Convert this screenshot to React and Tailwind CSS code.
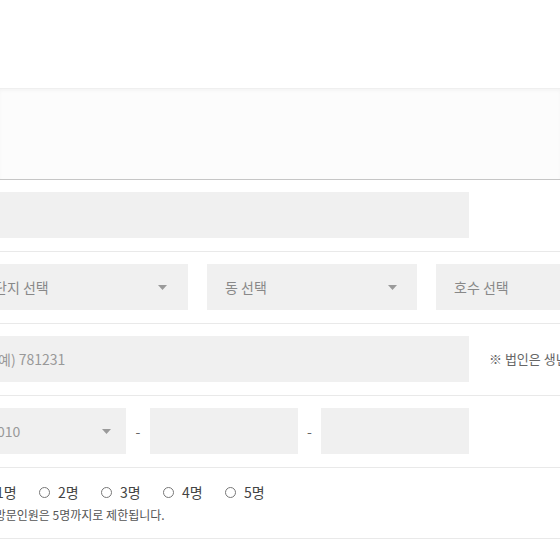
import React from 'react';

const font = { fontFamily: '"Noto Sans CJK KR", "Noto Sans", sans-serif' };

const Caret = () => (
  <svg width="9" height="5" viewBox="0 0 9 5" className="shrink-0">
    <path d="M0 0 H9 L4.5 5 Z" fill="#9a9a9a" />
  </svg>
);

const Row = ({ children, className = '' }) => (
  <div className={`border-b border-[#e9e9e9] pt-[12px] pb-[13px] ${className}`}>{children}</div>
);

const people = ['1명', '2명', '3명', '4명', '5명'];

export default function App() {
  return (
    <div
      className="w-[560px] h-[560px] overflow-hidden bg-white text-[14px] text-[#888]"
      style={font}
    >
      <div className="h-[88px] bg-white" />
      <div className="h-[92px] bg-[#fcfcfc] border-t border-[#efefef] border-b border-b-[#c6c6c6] shadow-[inset_0_2px_3px_rgba(0,0,0,0.03)]" />

      <div className="-ml-[20px] w-[700px]">
        <Row>
          <div className="w-[489px] h-[46px] bg-[#f0f0f0]" />
        </Row>

        <Row>
          <div className="flex gap-[19px]">
            <div className="w-[208px] shrink-0 h-[46px] bg-[#f0f0f0] flex items-center justify-between pl-[14px] pr-[21px]">
              <span>단지 선택</span>
              <Caret />
            </div>
            <div className="w-[210px] shrink-0 h-[46px] bg-[#f0f0f0] flex items-center justify-between pl-[18px] pr-[20px]">
              <span>동 선택</span>
              <Caret />
            </div>
            <div className="w-[210px] shrink-0 h-[46px] bg-[#f0f0f0] flex items-center pl-[18px]">
              <span>호수 선택</span>
            </div>
          </div>
        </Row>

        <Row>
          <div className="flex items-center">
            <div className="w-[489px] shrink-0 h-[46px] bg-[#f0f0f0] flex items-center pl-[18px] text-[#999]">
              예) 781231
            </div>
            <span className="ml-[20px] whitespace-nowrap text-[13px] text-[#666]">
              ※ 법인은 생년월일 대신 사업자번호를 입력해 주세요.
            </span>
          </div>
        </Row>

        <Row>
          <div className="flex items-center">
            <div className="w-[146px] shrink-0 h-[46px] bg-[#f0f0f0] flex items-center justify-between pl-[17px] pr-[15px] text-[#999]">
              <span>010</span>
              <Caret />
            </div>
            <span className="w-[24px] shrink-0 text-center text-[#666]">-</span>
            <div className="w-[148px] shrink-0 h-[46px] bg-[#f0f0f0]" />
            <span className="w-[23px] shrink-0 text-center text-[#666]">-</span>
            <div className="w-[148px] shrink-0 h-[46px] bg-[#f0f0f0]" />
          </div>
        </Row>

        <div className="border-b border-[#e9e9e9] h-[71px] pt-[14px]">
          <div className="flex -ml-[3px] text-[14px] text-[#444]">
            {people.map((p) => (
              <label key={p} className="w-[62px] shrink-0 flex items-center gap-[8px]">
                <span className="w-[11px] h-[11px] rounded-full border border-[#777] bg-white shrink-0" />
                <span>{p}</span>
              </label>
            ))}
          </div>
          <p className="mt-[3px] text-[12px] text-[#555] whitespace-nowrap">
            ※ 방문인원은 5명까지로 제한됩니다.
          </p>
        </div>
      </div>
    </div>
  );
}
